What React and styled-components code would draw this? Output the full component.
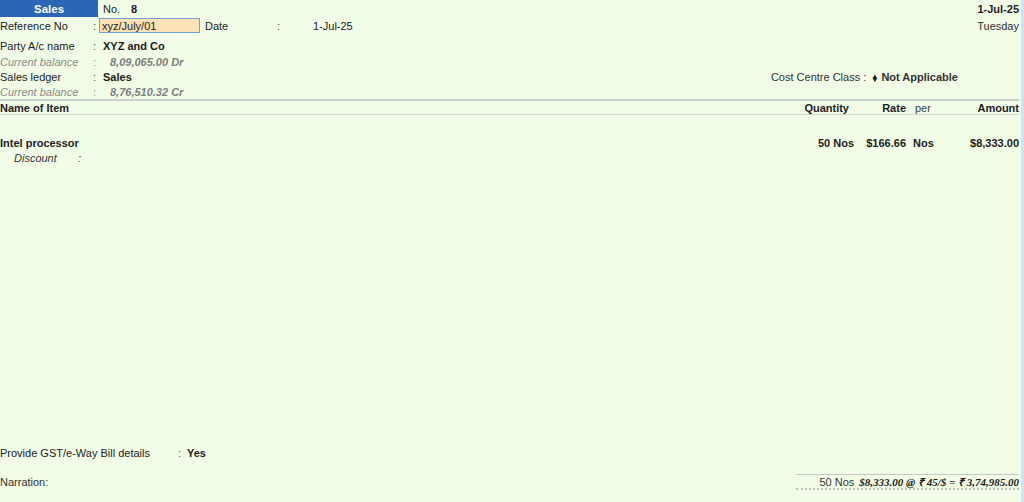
import React from 'react';
import styled, { createGlobalStyle } from 'styled-components';

const GlobalStyle = createGlobalStyle`
  html, body {
    margin: 0;
    padding: 0;
    background: #f2fde8;
  }
  body {
    font-family: 'Liberation Sans', Arial, sans-serif;
    font-size: 11px;
    color: #1c1c1c;
  }
`;

const voucher = {
  type: 'Sales',
  number: '8',
  reference: 'xyz/July/01',
  date: '1-Jul-25',
  day: 'Tuesday',
  party: 'XYZ and Co',
  partyBalance: '8,09,065.00 Dr',
  ledger: 'Sales',
  ledgerBalance: '8,76,510.32 Cr',
  items: [
    {
      name: 'Intel processor',
      qty: '50 Nos',
      rate: '$166.66',
      per: 'Nos',
      amount: '$8,333.00',
    },
  ],
};

const App = () => {
  return (
    <>
      <GlobalStyle />
      <Page>
        <Main>
          <Header>
            <Row h={17}>
              <TitleBar>{voucher.type}</TitleBar>
              <NoLabel>No.</NoLabel>
              <Strong>{voucher.number}</Strong>
              <RightText bold>{voucher.date}</RightText>
            </Row>
            <Row h={17}>
              <Label>Reference No</Label>
              <Colon w={6}>:</Colon>
              <RefInput>{voucher.reference}</RefInput>
              <DateLabel>Date</DateLabel>
              <Colon w={36}>:</Colon>
              <span>{voucher.date}</span>
              <RightText>{voucher.day}</RightText>
            </Row>
            <Row h={16} top={4}>
              <Label>Party A/c name</Label>
              <Colon w={10}>:</Colon>
              <Strong>{voucher.party}</Strong>
            </Row>
            <Row h={15}>
              <Label muted>Current balance</Label>
              <Colon w={17} muted>
                :
              </Colon>
              <Balance>{voucher.partyBalance}</Balance>
            </Row>
            <Row h={16}>
              <Label>Sales ledger</Label>
              <Colon w={10}>:</Colon>
              <Strong>{voucher.ledger}</Strong>
              <CostCentre>
                <span>Cost Centre Class :</span>
                <Diamond>♦</Diamond>
                <Strong>Not Applicable</Strong>
              </CostCentre>
            </Row>
            <Row h={14}>
              <Label muted>Current balance</Label>
              <Colon w={17} muted>
                :
              </Colon>
              <Balance>{voucher.ledgerBalance}</Balance>
            </Row>
          </Header>

          <TableHead>
            <NameCell>Name of Item</NameCell>
            <QtyCell pad={7}>Quantity</QtyCell>
            <RateCell>Rate</RateCell>
            <PerCell light>per</PerCell>
            <AmountCell>Amount</AmountCell>
          </TableHead>

          <Items>
            {voucher.items.map((item) => (
              <React.Fragment key={item.name}>
                <ItemRow>
                  <NameCell>{item.name}</NameCell>
                  <QtyCell pad={2}>{item.qty}</QtyCell>
                  <RateCell>{item.rate}</RateCell>
                  <PerCell>{item.per}</PerCell>
                  <AmountCell>{item.amount}</AmountCell>
                </ItemRow>
                <SubRow>
                  <SubLabel>Discount</SubLabel>
                  <span>:</span>
                </SubRow>
              </React.Fragment>
            ))}
          </Items>

          <Footer>
            <Row h={16}>
              <GstLabel>Provide GST/e-Way Bill details</GstLabel>
              <Colon w={9}>:</Colon>
              <Strong>Yes</Strong>
            </Row>
            <NarrationRow>
              <span>Narration:</span>
              <Totals>
                <span>50 Nos</span>
                <TotalValue>$8,333.00 @ ₹ 45/$ = ₹ 3,74,985.00</TotalValue>
              </Totals>
            </NarrationRow>
          </Footer>
        </Main>
        <SideStrip />
      </Page>
    </>
  );
};

export default App;

const Page = styled.div`
  display: flex;
  width: 1024px;
  height: 502px;
  overflow: hidden;
  background: #f2fde8;
`;

const Main = styled.div`
  flex: 1;
  display: flex;
  flex-direction: column;
  padding-right: 2px;
`;

const SideStrip = styled.div`
  width: 3px;
  background: #cfe4f6;
`;

const Header = styled.div`
  display: flex;
  flex-direction: column;
`;

const Row = styled.div`
  display: flex;
  align-items: center;
  height: ${({ h }) => h}px;
  margin-top: ${({ top }) => top || 0}px;
  white-space: nowrap;
`;

const TitleBar = styled.div`
  width: 98px;
  height: 17px;
  display: flex;
  align-items: center;
  justify-content: center;
  background: #2b66b6;
  color: #ffffff;
  font-weight: bold;
  font-size: 11.5px;
  margin-right: 5px;
`;

const NoLabel = styled.span`
  width: 28px;
`;

const Strong = styled.span`
  font-weight: bold;
`;

const RightText = styled.span`
  margin-left: auto;
  font-weight: ${({ bold }) => (bold ? 'bold' : 'normal')};
  color: ${({ bold }) => (bold ? '#1c1c1c' : '#333')};
`;

const Label = styled.span`
  width: 93px;
  color: ${({ muted }) => (muted ? '#8a8a8a' : '#1c1c1c')};
  font-style: ${({ muted }) => (muted ? 'italic' : 'normal')};
`;

const Colon = styled.span`
  width: ${({ w }) => w}px;
  color: ${({ muted }) => (muted ? '#9a9a9a' : '#555')};
`;

const RefInput = styled.div`
  box-sizing: border-box;
  width: 101px;
  height: 15px;
  padding: 0 2px;
  display: flex;
  align-items: center;
  background: #fde2b6;
  border: 1px solid #6f9fd6;
  color: #1c1c1c;
`;

const DateLabel = styled.span`
  margin-left: 5px;
  width: 72px;
`;

const Balance = styled.span`
  font-weight: bold;
  font-style: italic;
  color: #7e7e7e;
`;

const CostCentre = styled.div`
  margin-left: auto;
  margin-right: 61px;
  display: flex;
  align-items: center;
  color: #333;
`;

const Diamond = styled.span`
  font-size: 10px;
  transform: scaleY(1.3);
  margin: 0 4px 0 6px;
  color: #1c1c1c;
`;

const TableHead = styled.div`
  display: flex;
  align-items: center;
  height: 13px;
  border-top: 2px solid #c9d1c9;
  border-bottom: 1px solid #d2d9d2;
  font-weight: bold;
  white-space: nowrap;
`;

const NameCell = styled.span`
  flex: 1;
`;

const QtyCell = styled.span`
  width: 66px;
  text-align: right;
  padding-right: ${({ pad }) => pad}px;
`;

const RateCell = styled.span`
  width: 50px;
  text-align: right;
`;

const PerCell = styled.span`
  width: 33px;
  padding-left: ${({ light }) => (light ? 9 : 7)}px;
  box-sizing: border-box;
  font-weight: ${({ light }) => (light ? 'normal' : 'bold')};
  color: ${({ light }) => (light ? '#444' : '#1c1c1c')};
`;

const AmountCell = styled.span`
  width: 80px;
  text-align: right;
`;

const Items = styled.div`
  display: flex;
  flex-direction: column;
  padding-top: 20px;
`;

const ItemRow = styled.div`
  display: flex;
  align-items: center;
  height: 15px;
  font-weight: bold;
  white-space: nowrap;
`;

const SubRow = styled.div`
  display: flex;
  align-items: center;
  height: 15px;
  padding-left: 14px;
  font-style: italic;
  color: #333;
`;

const SubLabel = styled.span`
  width: 64px;
`;

const Footer = styled.div`
  margin-top: auto;
  display: flex;
  flex-direction: column;
  padding-bottom: 12px;
`;

const GstLabel = styled.span`
  width: 178px;
`;

const NarrationRow = styled.div`
  display: flex;
  align-items: center;
  justify-content: space-between;
  margin-top: 13px;
  height: 16px;
  color: #333;
`;

const Totals = styled.div`
  box-sizing: border-box;
  width: 223px;
  height: 16px;
  display: flex;
  align-items: center;
  justify-content: flex-end;
  gap: 5px;
  border-top: 1px solid #c3c9c3;
  border-bottom: 2px dotted #b8beb8;
  white-space: nowrap;
`;

const TotalValue = styled.span`
  font-family: 'Liberation Serif', 'Times New Roman', serif;
  font-weight: bold;
  font-style: italic;
  font-size: 11px;
  color: #1c1c1c;
`;
